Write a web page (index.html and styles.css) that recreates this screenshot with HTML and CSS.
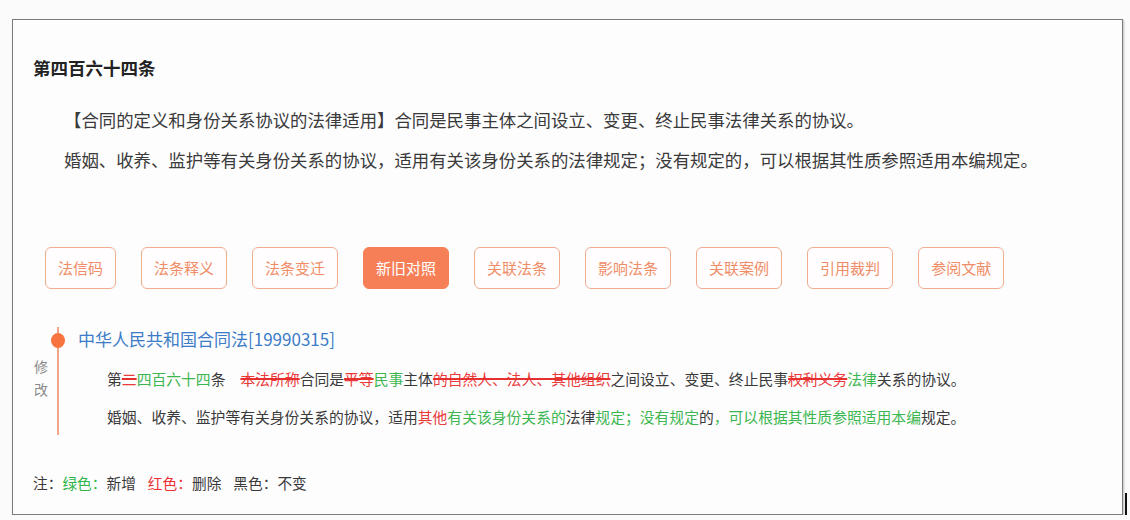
FILE: index.html
```html
<!DOCTYPE html>
<html lang="zh-CN">
<head>
<meta charset="utf-8">
<title>第四百六十四条</title>
<link rel="stylesheet" href="styles.css">
</head>
<body>
<div class="card">
  <h1 class="title">第四百六十四条</h1>
  <p class="para para-first">【合同的定义和身份关系协议的法律适用】合同是民事主体之间设立、变更、终止民事法律关系的协议。</p>
  <p class="para">婚姻、收养、监护等有关身份关系的协议，适用有关该身份关系的法律规定；没有规定的，可以根据其性质参照适用本编规定。</p>

  <div class="tabs">
    <span class="tab">法信码</span>
    <span class="tab">法条释义</span>
    <span class="tab">法条变迁</span>
    <span class="tab tab-active">新旧对照</span>
    <span class="tab">关联法条</span>
    <span class="tab">影响法条</span>
    <span class="tab">关联案例</span>
    <span class="tab">引用裁判</span>
    <span class="tab">参阅文献</span>
  </div>

  <div class="timeline">
    <div class="tl-label">修<br>改</div>
    <div class="tl-rail"><span class="tl-dot"></span></div>
    <div class="tl-body">
      <div class="law-name">中华人民共和国合同法[19990315]</div>
      <p class="diff">第<span class="del">二</span><span class="add">四百六十四</span>条<span class="gap"></span><span class="del">本法所称</span>合同是<span class="del">平等</span><span class="add">民事</span>主体<span class="del">的自然人、法人、其他组织</span>之间设立、变更、终止民事<span class="del">权利义务</span><span class="add">法律</span>关系的协议。</p>
      <p class="diff">婚姻、收养、监护等有关身份关系的协议，适用<span class="del-plain">其他</span><span class="add">有关该身份关系的</span>法律<span class="add">规定；没有规定</span>的<span class="add">，可以根据其性质参照适用本编</span>规定。</p>
    </div>
  </div>

  <p class="note">注：<span class="green">绿色：</span>新增<span class="sep"></span><span class="red">红色：</span>删除<span class="sep"></span>黑色：不变</p>
  <span class="cursor"></span>
</div>
</body>
</html>
```

FILE: styles.css
```css
html, body {
  margin: 0;
  padding: 0;
  background: #fbfbfc;
}
body {
  padding: 19px 0 0 12px;
  font-family: "Noto Sans CJK SC", "Noto Sans", sans-serif;
  color: #3a3a3a;
}
.card {
  position: relative;
  box-sizing: border-box;
  width: 1111px;
  height: 496px;
  border: 1px solid #7c7c7c;
  box-shadow: 1px 1px 2px rgba(0, 0, 0, 0.25);
  background: #fefdfe;
  padding: 36px 0 0 20px;
}
.title {
  margin: 0;
  font-size: 17.5px;
  line-height: 24px;
  font-weight: 700;
  color: #222;
}
.para {
  margin: 0;
  padding-left: 31px;
  font-size: 17.4px;
  line-height: 40px;
  color: #3a3a3a;
  white-space: nowrap;
}
.para-first {
  margin-top: 20px;
}
.tabs {
  display: flex;
  gap: 25px;
  margin-top: 67px;
  padding-left: 12px;
}
.tab {
  box-sizing: border-box;
  height: 42px;
  padding: 0 12px;
  border: 1px solid #f0ac8e;
  border-radius: 6px;
  font-size: 15px;
  line-height: 40px;
  color: #ef8d68;
  background: #fffdfd;
  white-space: nowrap;
}
.tab-active {
  background: #f77f58;
  border-color: #f77f58;
  color: #fff;
}
.timeline {
  display: flex;
  margin-top: 38px;
}
.tl-label {
  width: 15px;
  margin-left: 1px;
  padding-top: 28px;
  font-size: 14px;
  line-height: 23px;
  color: #8a8a8a;
}
.tl-rail {
  width: 14px;
  margin-left: 2px;
  margin-bottom: 1px;
  background: linear-gradient(to right, transparent 6.2px, #f2a486 6.2px, #f2a486 7.8px, transparent 7.8px);
}
.tl-dot {
  display: block;
  width: 14px;
  height: 15px;
  margin-top: 6px;
  border-radius: 50%;
  background: #f7733f;
}
.tl-body {
  margin-left: 13px;
}
.law-name {
  font-size: 17px;
  line-height: 24px;
  color: #3c7cc6;
  white-space: nowrap;
}
.diff {
  margin: 9px 0 0 29px;
  font-size: 14.8px;
  line-height: 38px;
  color: #3a3a3a;
  white-space: nowrap;
}
.diff + .diff {
  margin-top: 0;
}
.gap {
  display: inline-block;
  width: 15px;
}
.del {
  color: #ea3b3b;
  text-decoration: line-through;
  text-decoration-color: #e63030;
  text-decoration-thickness: 2px;
}
.del-plain {
  color: #ea3b3b;
}
.add {
  color: #3cb650;
}
.note {
  margin: 36px 0 0 0;
  font-size: 14.7px;
  line-height: 22px;
  color: #3a3a3a;
  white-space: nowrap;
}
.green {
  color: #2fb548;
}
.red {
  color: #ea3030;
}
.sep {
  display: inline-block;
  width: 12px;
}
.cursor {
  position: absolute;
  right: -5px;
  bottom: -5px;
  width: 2px;
  height: 26px;
  background: #111;
}
```
